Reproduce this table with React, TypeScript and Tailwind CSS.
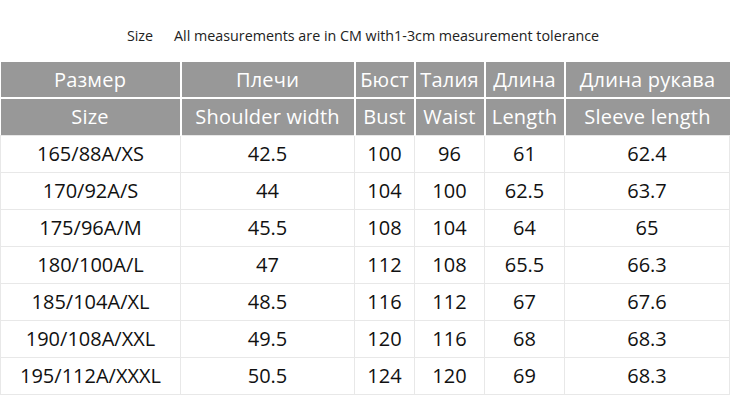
const head1 = ["Размер", "Плечи", "Бюст", "Талия", "Длина", "Длина рукава"];
const head2 = ["Size", "Shoulder width", "Bust", "Waist", "Length", "Sleeve length"];

const rows = [
  ["165/88A/XS", "42.5", "100", "96", "61", "62.4"],
  ["170/92A/S", "44", "104", "100", "62.5", "63.7"],
  ["175/96A/M", "45.5", "108", "104", "64", "65"],
  ["180/100A/L", "47", "112", "108", "65.5", "66.3"],
  ["185/104A/XL", "48.5", "116", "112", "67", "67.6"],
  ["190/108A/XXL", "49.5", "120", "116", "68", "68.3"],
  ["195/112A/XXXL", "50.5", "124", "120", "69", "68.3"],
];

const widths = ["w-[180px]", "w-[174px]", "w-[60px]", "w-[70px]", "w-[80px]", "w-[165px]"];

export default function App() {
  return (
    <div className="w-[730px] h-[411px] bg-white font-['Open_Sans',sans-serif] overflow-hidden">
      <div className="h-[62px] pt-[25px] flex justify-center text-[14.3px] text-[#222] leading-[22px]">
        <span className="ml-[-4px]">Size</span>
        <span className="ml-[21px]">All measurements are in CM with1-3cm measurement tolerance</span>
      </div>
      <table className="border-collapse table-fixed w-[729px] text-center">
        <colgroup>
          {widths.map((w, i) => (
            <col key={i} className={w} />
          ))}
        </colgroup>
        <thead className="bg-[#989898] text-white text-[20px] tracking-[0.2px]">
          <tr className="h-[36px]">
            {head1.map((h, i) => (
              <th key={i} className="font-normal border-l-2 border-white first:border-l-0 border-b-2 px-0 whitespace-nowrap">
                {h}
              </th>
            ))}
          </tr>
          <tr className="h-[37px]">
            {head2.map((h, i) => (
              <th key={i} className="font-normal border-l-2 border-white first:border-l-0 px-0 whitespace-nowrap">
                {h}
              </th>
            ))}
          </tr>
        </thead>
        <tbody className="text-[20px] text-[#111]">
          {rows.map((r, ri) => (
            <tr key={ri} className="h-[37px]">
              {r.map((c, ci) => (
                <td key={ci} className="border border-[#e8e8e8] px-0 whitespace-nowrap">
                  {c}
                </td>
              ))}
            </tr>
          ))}
        </tbody>
      </table>
    </div>
  );
}
